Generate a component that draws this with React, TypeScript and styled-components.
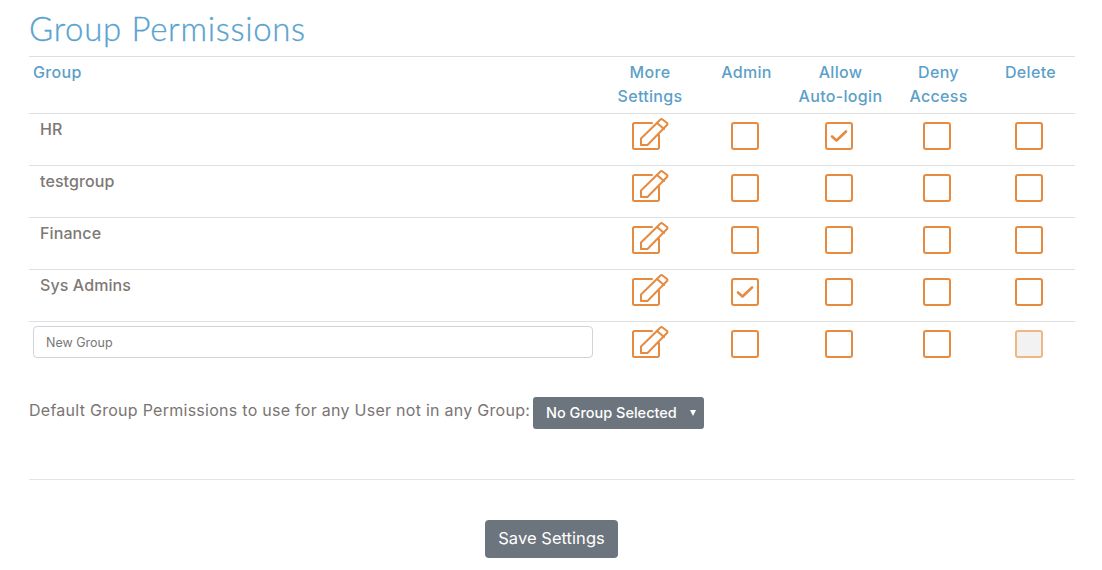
import React from "react";
import styled, { createGlobalStyle } from "styled-components";

const GlobalStyle = createGlobalStyle`
  html, body { margin: 0; padding: 0; background: #fff; }
  body { font-family: Inter, "Liberation Sans", sans-serif; color: #7a7573; }
  * { box-sizing: border-box; }
`;

const Page = styled.div`
  width: 1102px;
  height: 570px;
  padding: 0 27px 0 29px;
  overflow: hidden;
`;

const Title = styled.h1`
  margin: 0;
  height: 56px;
  padding-top: 8px;
  font-family: Lato, sans-serif;
  font-size: 33px;
  line-height: 40px;
  font-weight: 300;
  color: #58a3cf;
  letter-spacing: 0.68px;
  -webkit-text-stroke: 0.3px #58a3cf;
`;

const Row = styled.div<{ $header?: boolean }>`
  display: grid;
  grid-template-columns: 568px 106px 87px 101px 95px 89px;
  height: ${(p) => (p.$header ? 57 : 52)}px;
  border-top: 1px solid #dedfe2;
`;

const HeadCell = styled.div<{ $left?: boolean }>`
  padding: 3px ${(p) => (p.$left ? "0 0 4px" : "0 0")};
  text-align: ${(p) => (p.$left ? "left" : "center")};
  font-size: 16px;
  line-height: 24px;
  font-weight: 500;
  letter-spacing: 0.32px;
  color: #5c9fc8;
`;

const NameCell = styled.div`
  padding: 3px 0 0 11px;
  font-size: 16px;
  line-height: 24px;
  font-weight: 500;
  letter-spacing: 0.1px;
  color: #7e7876;
`;

const InputCell = styled.div`
  padding: 4px;
`;

const NameInput = styled.input`
  display: block;
  width: 560px;
  height: 32px;
  padding: 0 12px;
  border: 1px solid #ced4da;
  border-radius: 4px;
  font-family: Inter, sans-serif;
  font-size: 12.5px;
  color: #777;
  outline: none;
  &::placeholder { color: #777; opacity: 1; }
`;

const IconCell = styled.div`
  padding: 3px 0 0 34px;
`;

const BoxCell = styled.div<{ $left: number }>`
  padding: 8px 0 0 ${(p) => p.$left}px;
`;

const CheckBox = styled.div<{ $disabled?: boolean }>`
  width: 28px;
  height: 28px;
  border: 2px solid ${(p) => (p.$disabled ? "#f0b684" : "#e58a3f")};
  border-radius: 3px;
  background: ${(p) => (p.$disabled ? "#f2f2f2" : "#fff")};
  display: flex;
  align-items: center;
  justify-content: center;
`;

const DefaultLine = styled.div`
  display: flex;
  align-items: flex-start;
  margin-top: 24px;
  height: 82px;
`;

const DefaultLabel = styled.label`
  width: 504px;
  font-size: 16px;
  line-height: 27px;
  letter-spacing: 0.27px;
  white-space: nowrap;
  color: #7a7573;
`;

const SelectWrap = styled.div`
  position: relative;
  width: 171px;
  height: 32px;
  &::after {
    content: "";
    position: absolute;
    right: 8px;
    top: 13px;
    border-left: 3px solid transparent;
    border-right: 3px solid transparent;
    border-top: 6px solid #fff;
    pointer-events: none;
  }
`;

const GroupSelect = styled.select`
  appearance: none;
  display: block;
  width: 100%;
  height: 100%;
  padding: 0 0 1px 13px;
  border: 0;
  border-radius: 3px;
  background: #6c757d;
  color: #fff;
  font-family: Inter, sans-serif;
  font-size: 14.5px;
  font-weight: 500;
  outline: none;
`;

const Footer = styled.div`
  border-top: 1px solid #e4e4e6;
  display: flex;
  justify-content: center;
  padding-top: 40px;
  padding-right: 1px;
`;

const SaveButton = styled.button`
  width: 133px;
  height: 38px;
  padding: 0 0 2px;
  border: 0;
  border-radius: 4px;
  background: #6c757d;
  color: #fff;
  font-family: Inter, sans-serif;
  font-size: 16.5px;
  font-weight: 400;
  letter-spacing: 0.05px;
`;

const EditIcon = () => (
  <svg width="38" height="34" viewBox="0 0 38 34" fill="none" stroke="#e58a3f" strokeWidth="2" strokeLinejoin="round" strokeLinecap="round">
    <path d="M21 6H3.500A1.500 1.500 0 0 0 2 7.500V30.500A1.500 1.500 0 0 0 3.500 32H26.500A1.500 1.500 0 0 0 28 30.500V18" />
    <path d="M10 28V21.500L29.500 2.500a1.500 1.500 0 0 1 2 0l4.500 3.500a1.500 1.500 0 0 1 0 2L16.500 28z" />
    <path d="M26 6l7 6" />
  </svg>
);

const CheckMark = () => (
  <svg width="18" height="14" viewBox="0 0 18 14" fill="none" stroke="#e58a3f" strokeWidth="2.600" strokeLinecap="round" strokeLinejoin="round">
    <path d="M2 7.500l4.500 4L16 2.500" />
  </svg>
);

type GroupRow = { name: string; admin?: boolean; auto?: boolean };

const groups: GroupRow[] = [
  { name: "HR", auto: true },
  { name: "testgroup" },
  { name: "Finance" },
  { name: "Sys Admins", admin: true },
];

const Tail = ({ admin, auto, newRow }: { admin?: boolean; auto?: boolean; newRow?: boolean }) => (
  <>
    <IconCell><EditIcon /></IconCell>
    <BoxCell $left={28}><CheckBox>{admin && <CheckMark />}</CheckBox></BoxCell>
    <BoxCell $left={35}><CheckBox>{auto && <CheckMark />}</CheckBox></BoxCell>
    <BoxCell $left={32}><CheckBox /></BoxCell>
    <BoxCell $left={29}><CheckBox $disabled={newRow} /></BoxCell>
  </>
);

export default function App() {
  return (
    <Page>
      <GlobalStyle />
      <Title>Group Permissions</Title>
      <Row $header>
        <HeadCell $left>Group</HeadCell>
        <HeadCell>More<br />Settings</HeadCell>
        <HeadCell>Admin</HeadCell>
        <HeadCell>Allow<br />Auto-login</HeadCell>
        <HeadCell>Deny<br />Access</HeadCell>
        <HeadCell>Delete</HeadCell>
      </Row>
      {groups.map((g) => (
        <Row key={g.name}>
          <NameCell>{g.name}</NameCell>
          <Tail admin={g.admin} auto={g.auto} />
        </Row>
      ))}
      <Row>
        <InputCell><NameInput placeholder="New Group" /></InputCell>
        <Tail newRow />
      </Row>
      <DefaultLine>
        <DefaultLabel>Default Group Permissions to use for any User not in any Group:</DefaultLabel>
        <SelectWrap>
          <GroupSelect defaultValue="none">
            <option value="none">No Group Selected</option>
          </GroupSelect>
        </SelectWrap>
      </DefaultLine>
      <Footer>
        <SaveButton>Save Settings</SaveButton>
      </Footer>
    </Page>
  );
}
